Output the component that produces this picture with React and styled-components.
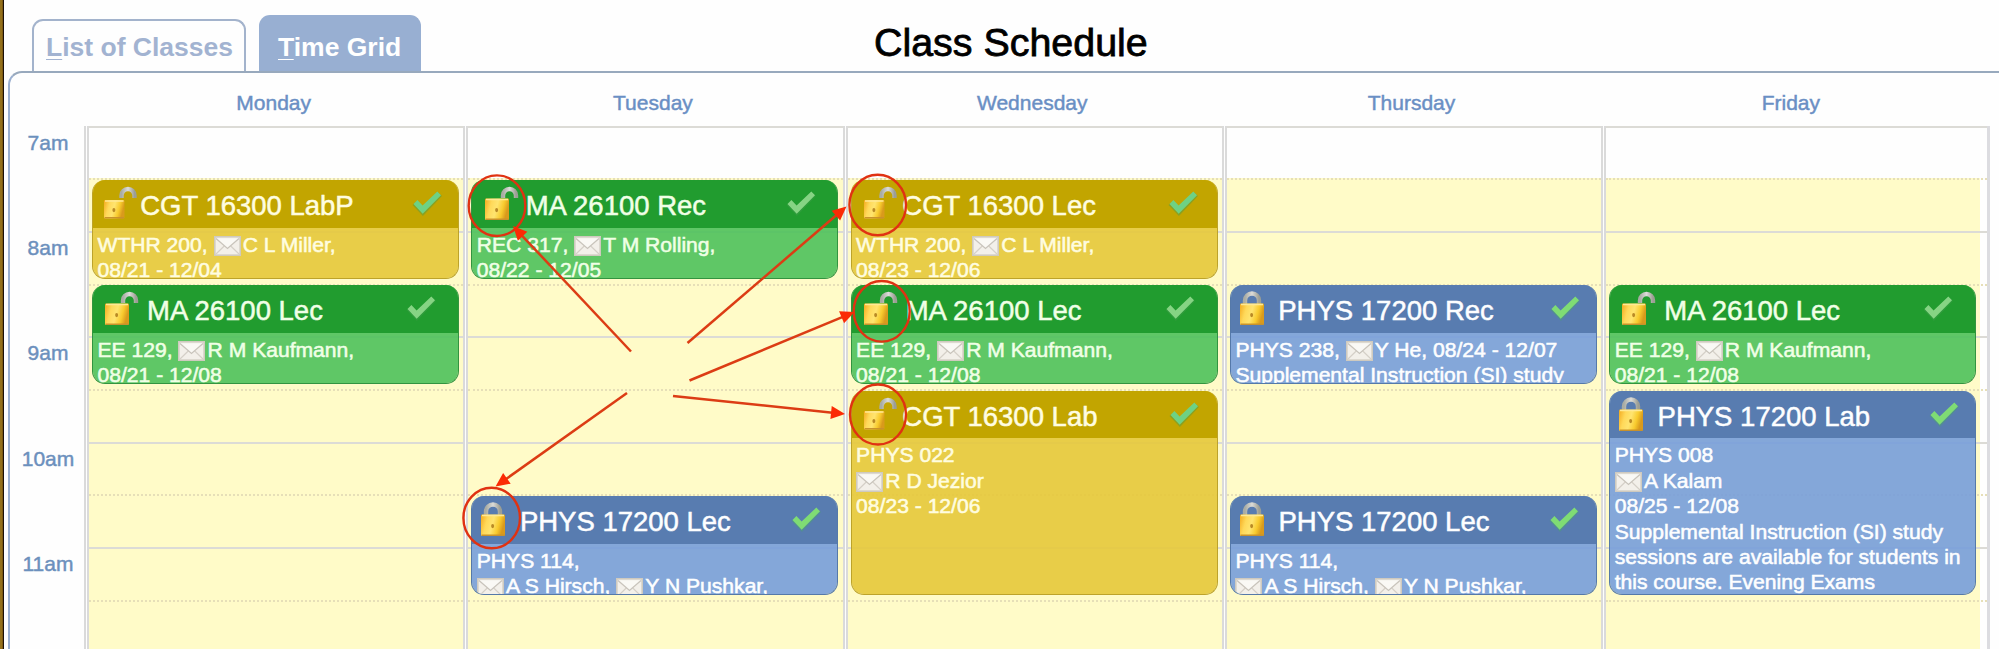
import React from "react";
import styled, { createGlobalStyle } from "styled-components";

const GlobalStyle = createGlobalStyle`
  * { box-sizing: border-box; }
  body {
    margin: 0;
    background: #fefefe;
    font-family: "Liberation Sans", Arial, sans-serif;
    overflow: hidden;
  }
`;

const palettes = {
  gold: { head: "#c2a500", body: "rgba(229, 200, 58, 0.9)", edge: "#bda32a", ink: "#fffde0", check: "#6ed184", shade: "#5f9f3c" },
  green: { head: "#219c2f", body: "rgba(78, 193, 91, 0.9)", edge: "#329440", ink: "#f0ffe6", check: "#86d484", shade: "#3a9c45" },
  blue: { head: "#587cb0", body: "rgba(119, 157, 218, 0.9)", edge: "#5579a9", ink: "#fdfeff", check: "#7fdc74", shade: "#4f9c7c" },
};

const Page = styled.div`
  position: relative;
  width: 1999px;
  height: 649px;
  overflow: hidden;
  display: flex;
`;

const WindowEdge = styled.div`
  flex: 0 0 4px;
  background: linear-gradient(90deg, #94701a 0 2px, #7d5a12 2px 3px, #1b1008 3px 4px);
`;

const Main = styled.div`
  flex: 0 0 2010px;
  padding-left: 4px;
  display: flex;
  flex-direction: column;
`;

const TopBar = styled.div`
  display: flex;
  align-items: flex-end;
  flex: 0 0 71px;
  padding-left: 24px;
`;

const Tab = styled.div`
  width: ${(p) => (p.$active ? 162 : 214)}px;
  height: ${(p) => (p.$active ? 56 : 52)}px;
  margin-right: 13px;
  padding: ${(p) => (p.$active ? "15px 0 0 17px" : "11px 0 0 12px")};
  border: 2px solid ${(p) => (p.$active ? "#98afd2" : "#a3b3cc")};
  border-bottom: 0;
  border-radius: 11px 11px 0 0;
  background: ${(p) => (p.$active ? "#98afd2" : "#fefefe")};
  color: ${(p) => (p.$active ? "#fff" : "#a2b3d1")};
  font-size: 26.5px;
  font-weight: 700;
  line-height: 30px;
  white-space: nowrap;
`;

const AccessKey = styled.span`
  text-decoration: underline;
  text-decoration-thickness: 1px;
  text-underline-offset: 3px;
`;

const Title = styled.h1`
  margin: 0 0 7px 440px;
  font-size: 39.4px;
  font-weight: 400;
  line-height: 44px;
  color: #000;
  -webkit-text-stroke: 0.8px #000;
`;

const Panel = styled.div`
  flex: 0 0 600px;
  border: 2px solid #9aafcf;
  border-top-color: #98a9bd;
  border-radius: 14px 0 0 0;
`;

const DayNames = styled.div`
  display: flex;
  height: 52.5px;
  padding: 18px 0 0 74px;
`;

const DayName = styled.div`
  flex: 0 0 379.3px;
  text-align: center;
  font-size: 21px;
  line-height: 24px;
  color: #6a8fc4;
  -webkit-text-stroke: 0.45px #6a8fc4;
`;

const Calendar = styled.div`
  display: flex;
`;

const Hours = styled.div`
  flex: 0 0 74px;
  padding: 5px 0 0 2px;
`;

const Hour = styled.div`
  height: 105.4px;
  text-align: center;
  font-size: 21px;
  line-height: 24px;
  color: #6c90bd;
  -webkit-text-stroke: 0.45px #6c90bd;
`;

const Day = styled.div`
  flex: 0 0 ${(p) => (p.$last ? 388.5 : 379.3)}px;
  display: grid;
  grid-template-rows: repeat(11, 52.7px);
  grid-template-columns: 100%;
  border-left: 5px double #dadada;
  border-right: ${(p) => (p.$last ? "3px solid #dcdce0" : "0")};
`;

const Slot = styled.div`
  grid-column: 1;
  grid-row: ${(p) => p.$row};
  border-top: 2px ${(p) => (p.$row % 2 ? "solid #dcdbd6" : "dotted #e6dfb8")};
  background: ${(p) =>
    p.$row === 1 ? "#fefefe" : p.$last ? "linear-gradient(90deg, #fffbc8 374px, #fefefe 374px)" : "#fffbc8"};
`;

const Card = styled.article`
  grid-column: 1;
  grid-row: ${(p) => p.$start} / span ${(p) => p.$span};
  z-index: 1;
  width: 367px;
  margin: 1.8px 0 5px 3px;
  border: 1.5px solid ${(p) => p.$c.edge};
  border-top: 0;
  border-radius: 13px;
  overflow: hidden;
  background: ${(p) => p.$c.body};
  background-clip: padding-box;
  color: ${(p) => p.$c.ink};
`;

const CardHead = styled.header`
  display: grid;
  grid-template-columns: ${(p) => p.$title - 1}px ${(p) => p.$check - p.$title}px 1fr;
  height: 47.6px;
  background: ${(p) => p.$c.head};
`;

const CourseName = styled.div`
  padding-top: 10px;
  font-size: 27.5px;
  line-height: 31px;
  white-space: nowrap;
  -webkit-text-stroke: 0.5px currentColor;
`;

const LockIcon = styled.svg`
  display: block;
  width: 36px;
  height: 36px;
  margin: 6px 0 0 ${(p) => p.$left - 1}px;
  overflow: visible;
`;

const CheckIcon = styled.svg`
  display: block;
  width: 32px;
  height: 27px;
  margin-top: 10px;
`;

const Details = styled.div`
  padding: 4px 0 0 4.5px;
  font-size: 21.1px;
  line-height: 25.4px;
  white-space: nowrap;
  -webkit-text-stroke: 0.55px currentColor;
`;

const DetailLine = styled.div`
  height: 25.4px;
`;

const MailIcon = styled.svg`
  display: inline-block;
  width: 27px;
  height: 20px;
  margin: -4px 2.2px -4px 0;
  vertical-align: -0.5px;
`;

const Notes = styled.svg`
  position: absolute;
  inset: 0;
  z-index: 2;
  pointer-events: none;
`;

const Defs = styled.svg`
  position: absolute;
`;

function Gradients() {
  return (
    <Defs width="0" height="0">
      <defs>
        <linearGradient id="brass" x1="0" x2="1" y1="0" y2="0.25">
          <stop offset="0" stopColor="#f3a91d" />
          <stop offset="0.3" stopColor="#ffd95a" />
          <stop offset="0.55" stopColor="#ffe46f" />
          <stop offset="0.8" stopColor="#f8cb2e" />
          <stop offset="1" stopColor="#d99a1c" />
        </linearGradient>
        <linearGradient id="steel" x1="0" x2="1" y1="0" y2="0">
          <stop offset="0" stopColor="#a9aca4" />
          <stop offset="0.5" stopColor="#dcdcd8" />
          <stop offset="1" stopColor="#9c9e94" />
        </linearGradient>
      </defs>
    </Defs>
  );
}

function Lock({ open, small, left }) {
  const w = small ? 20.5 : 24;
  const y = small ? 14 : 12.5;
  const h = small ? 18.5 : 21.5;
  const s = open ? (small ? 17.5 : 18) : 5;
  return (
    <LockIcon $left={left} viewBox="0 0 36 36">
      {open ? (
        <path d={`M${s} 12V9.5a6.5 6.5 0 0 1 13 0V12`} fill="none" stroke="url(#steel)" strokeWidth="4.4" />
      ) : (
        <path d={`M${s} 14V9.5a7 7 0 0 1 14 0V14`} fill="none" stroke="url(#steel)" strokeWidth="4.4" />
      )}
      <rect x="0" y={y} width={w} height={h} rx="1.2" fill="url(#brass)" />
      <path d={`M1 ${y + 1}H${w - 1}`} stroke="#ffe995" strokeWidth="1.4" />
      <path d={`M0.6 ${y + h - 0.8}H${w - 0.6}`} stroke="#c9922b" strokeWidth="1.4" />
      <ellipse cx={w / 2 - 0.4} cy={y + h / 2 + 0.8} rx="1.5" ry="2.1" fill="#b98a26" />
    </LockIcon>
  );
}

function Check({ c }) {
  return (
    <CheckIcon viewBox="0 0 32 27">
      <path d="M1.5 15 6 11.2 11.6 17.6 26.5 2 31 6 11.9 26Z" fill={c.shade} opacity="0.55" />
      <path d="M2.5 14 6.4 10 11.6 15.6 26.3 1.6 30 5.2 11.7 23.8Z" fill={c.check} />
    </CheckIcon>
  );
}

function Mail() {
  return (
    <MailIcon viewBox="0 0 27 20">
      <rect x="0.8" y="0.8" width="25.4" height="18.4" fill="#f3f0ea" stroke="#cfcabf" strokeWidth="1.6" />
      <path d="M2 18 10.5 9.8M25 18 16.5 9.8" stroke="#d5d0c8" strokeWidth="1.2" />
      <path d="M2 2.5 13.5 12.5 25 2.5" fill="#faf9f5" stroke="#c9c4bc" strokeWidth="1.3" />
    </MailIcon>
  );
}

const M = <Mail />;
const days = [
  {
    name: "Monday",
    events: [
      { start: 2, span: 2, tone: "gold", name: "CGT 16300 LabP", lock: 11.5, title: 48.2, check: 319.5, lines: [<>WTHR 200, {M}C L Miller,</>, "08/21 - 12/04"] },
      { start: 4, span: 2, tone: "green", name: "MA 26100 Lec", lock: 13.3, title: 55.1, check: 313, lines: [<>EE 129, {M}R M Kaufmann,</>, "08/21 - 12/08"] },
    ],
  },
  {
    name: "Tuesday",
    events: [
      { start: 2, span: 2, tone: "green", name: "MA 26100 Rec", lock: 13.3, title: 54.4, check: 314, lines: [<>REC 317, {M}T M Rolling,</>, "08/22 - 12/05"] },
      { start: 8, span: 2, tone: "blue", name: "PHYS 17200 Lec", locked: true, lock: 10, title: 48.6, check: 318.5, lines: ["PHYS 114,", <>{M}A S Hirsch, {M}Y N Pushkar,</>] },
    ],
  },
  {
    name: "Wednesday",
    events: [
      { start: 2, span: 2, tone: "gold", name: "CGT 16300 Lec", lock: 13.2, title: 51.7, check: 316.5, lines: [<>WTHR 200, {M}C L Miller,</>, "08/23 - 12/06"] },
      { start: 4, span: 2, tone: "green", name: "MA 26100 Lec", lock: 13.3, title: 55.1, check: 313, lines: [<>EE 129, {M}R M Kaufmann,</>, "08/21 - 12/08"] },
      { start: 6, span: 4, tone: "gold", name: "CGT 16300 Lab", lock: 13.2, title: 51.7, check: 317, lines: ["PHYS 022", <>{M}R D Jezior</>, "08/23 - 12/06"] },
    ],
  },
  {
    name: "Thursday",
    events: [
      { start: 4, span: 2, tone: "blue", name: "PHYS 17200 Rec", locked: true, lock: 10, title: 48.4, check: 319.5, lines: [<>PHYS 238, {M}Y He, 08/24 - 12/07</>, "Supplemental Instruction (SI) study"] },
      { start: 8, span: 2, tone: "blue", name: "PHYS 17200 Lec", locked: true, lock: 10, title: 48.6, check: 318.5, lines: ["PHYS 114,", <>{M}A S Hirsch, {M}Y N Pushkar,</>] },
    ],
  },
  {
    name: "Friday",
    events: [
      { start: 4, span: 2, tone: "green", name: "MA 26100 Lec", lock: 13.3, title: 55.1, check: 313, lines: [<>EE 129, {M}R M Kaufmann,</>, "08/21 - 12/08"] },
      {
        start: 6, span: 4, tone: "blue", name: "PHYS 17200 Lab", locked: true, lock: 10, title: 48.4, check: 319,
        lines: ["PHYS 008", <>{M}A Kalam</>, "08/25 - 12/08", "Supplemental Instruction (SI) study", "sessions are available for students in", "this course. Evening Exams"],
      },
    ],
  },
];

function Event({ event }) {
  const c = palettes[event.tone];
  return (
    <Card $c={c} $start={event.start} $span={event.span}>
      <CardHead $c={c} $title={event.title} $check={event.check}>
        <Lock open={!event.locked} small={event.tone === "gold"} left={event.lock} />
        <CourseName>{event.name}</CourseName>
        <Check c={c} />
      </CardHead>
      <Details>
        {event.lines.map((line, i) => (
          <DetailLine key={i}>{line}</DetailLine>
        ))}
      </Details>
    </Card>
  );
}

const circles = [
  [497, 205.7, 28.3, 30.3],
  [877.7, 205, 28.3, 30.3],
  [881.7, 311.3, 28, 30.3],
  [878, 414.5, 28, 30],
  [491.7, 518, 28.3, 30.3],
];

const arrows = [
  [631, 351.5, 513, 226],
  [687.5, 343, 846.5, 206.5],
  [689.5, 380.5, 854.5, 312],
  [673, 396, 845, 414],
  [627, 393, 495.5, 486.5],
];

function Arrow({ from: [x1, y1], to: [x2, y2] }) {
  const length = Math.hypot(x2 - x1, y2 - y1);
  const angle = (Math.atan2(y2 - y1, x2 - x1) * 180) / Math.PI;
  return (
    <g transform={`translate(${x1} ${y1}) rotate(${angle})`}>
      <path d={`M0 0H${length - 10}`} stroke="#dc3c14" strokeWidth="2.5" />
      <path d={`M${length} 0l-14 -6.5v13Z`} fill="#fb2b05" />
    </g>
  );
}

export default function App() {
  return (
    <Page>
      <GlobalStyle />
      <Gradients />
      <WindowEdge />
      <Main>
        <TopBar>
          <Tab><AccessKey>L</AccessKey>ist of Classes</Tab>
          <Tab $active><AccessKey>T</AccessKey>ime Grid</Tab>
          <Title>Class Schedule</Title>
        </TopBar>
        <Panel>
          <DayNames>
            {days.map((d) => <DayName key={d.name}>{d.name}</DayName>)}
          </DayNames>
          <Calendar>
            <Hours>
              {["7am", "8am", "9am", "10am", "11am"].map((h) => <Hour key={h}>{h}</Hour>)}
            </Hours>
            {days.map((d, di) => (
              <Day key={d.name} $last={di === 4}>
                {Array.from({ length: 11 }, (_, i) => <Slot key={i} $row={i + 1} $last={di === 4} />)}
                {d.events.map((e) => <Event key={e.start} event={e} />)}
              </Day>
            ))}
          </Calendar>
        </Panel>
      </Main>
      <Notes width="1999" height="649" viewBox="0 0 1999 649">
        {circles.map(([cx, cy, rx, ry]) => (
          <ellipse key={`${cx}-${cy}`} cx={cx} cy={cy} rx={rx} ry={ry} fill="none" stroke="#e03212" strokeWidth="2.4" />
        ))}
        {arrows.map(([x1, y1, x2, y2]) => <Arrow key={`${x1}-${y1}`} from={[x1, y1]} to={[x2, y2]} />)}
      </Notes>
    </Page>
  );
}
